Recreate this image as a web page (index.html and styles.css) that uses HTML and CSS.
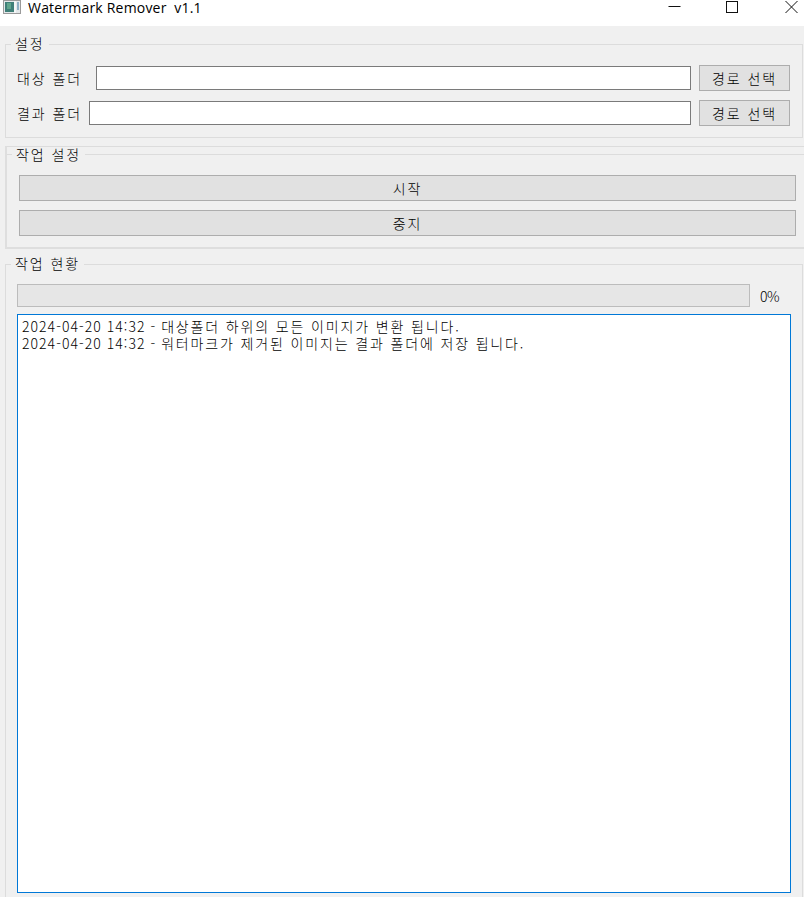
FILE: index.html
```html
<!DOCTYPE html>
<html lang="ko">
<head>
    <meta charset="UTF-8">
    <meta name="viewport" content="width=device-width, initial-scale=1.0">
    <title>Watermark Remover v1.1</title>
    <link rel="stylesheet" href="styles.css">
</head>
<body>
    <div class="titlebar">
        <svg class="app-icon" width="18" height="15" viewBox="0 0 18 15">
            <rect x="0" y="0" width="18" height="14" fill="#9a9a9a"/>
            <rect x="1" y="1" width="16" height="12" fill="#e4e8ea"/>
            <rect x="2" y="2" width="9" height="10" fill="#3f7f78"/>
            <rect x="4" y="3" width="4" height="6" fill="#5fa58c"/>
            <rect x="11" y="1" width="2" height="12" fill="#f4f6f6"/>
            <rect x="14" y="2" width="2" height="8" fill="#8fb0c4"/>
        </svg>
        <span class="app-title">Watermark Remover  v1.1</span>
        <div class="win-controls">
            <div class="win-btn">
                <svg width="13" height="13" viewBox="0 0 13 13"><path d="M0.5 6.5H12.5" stroke="#111" fill="none"/></svg>
            </div>
            <div class="win-btn">
                <svg width="13" height="13" viewBox="0 0 13 13"><rect x="0.5" y="1.5" width="11" height="11" stroke="#111" fill="none"/></svg>
            </div>
            <div class="win-btn">
                <svg width="13" height="13" viewBox="0 0 13 13"><path d="M0.5 1L12.5 13M12.5 1L0.5 13" stroke="#111" fill="none"/></svg>
            </div>
        </div>
    </div>

    <div class="content">
        <fieldset class="group group-paths">
            <legend>설정</legend>
            <div class="row">
                <label class="row-label wide">대상 폴더</label>
                <input class="path-input" type="text">
                <button class="btn btn-path">경로 선택</button>
            </div>
            <div class="row">
                <label class="row-label">결과 폴더</label>
                <input class="path-input" type="text">
                <button class="btn btn-path">경로 선택</button>
            </div>
        </fieldset>

        <div class="frame">
            <fieldset class="group group-inner">
                <legend>작업 설정</legend>
                <button class="btn btn-wide">시작</button>
                <button class="btn btn-wide">중지</button>
            </fieldset>
        </div>

        <fieldset class="group group-status">
            <legend>작업 현황</legend>
            <div class="progress-row">
                <div class="progress"></div>
                <span class="progress-text">0%</span>
            </div>
            <div class="log">
                <div><span class="log-time">2024-04-20 14:32 - </span>대상폴더 하위의 모든 이미지가 변환 됩니다.</div>
                <div><span class="log-time">2024-04-20 14:32 - </span>워터마크가 제거된 이미지는 결과 폴더에 저장 됩니다.</div>
            </div>
        </fieldset>
    </div>
</body>
</html>
```

FILE: styles.css
```css
html, body {
    height: 897px;
    overflow: hidden;
}

body {
    margin: 0;
    padding: 0;
    background-color: #F0F0F0;
    color: #000000;
    font-family: 'Noto Sans CJK KR', sans-serif;
    font-size: 14px;
    font-weight: 300;
}

.titlebar {
    display: flex;
    align-items: flex-start;
    height: 26px;
    padding-left: 3px;
    background-color: white;
}

.app-icon {
    flex: none;
}

.app-title {
    margin-left: 7px;
    font-family: 'Open Sans', sans-serif;
    font-size: 14px;
    font-weight: 400;
    line-height: 15px;
    letter-spacing: 0.2px;
    white-space: pre;
    color: #000000;
}

.win-controls {
    display: flex;
    margin-left: auto;
}

.win-btn {
    display: flex;
    justify-content: center;
    width: 58px;
}

.win-btn:last-child {
    justify-content: flex-start;
    width: 19px;
    padding-left: 24px;
}

.content {
    padding: 10px 1px 0 5px;
}

.group {
    margin: 0;
    padding: 0 12px 0 11px;
    min-width: 0;
    border: 1px solid #DCDCDC;
}

.group legend {
    margin-left: -6px;
    padding: 0 4px;
    height: 16px;
    line-height: 15px;
    letter-spacing: 1.9px;
}

.group-paths {
    padding-bottom: 12px;
}

.row {
    display: flex;
    align-items: center;
    gap: 8px;
    height: 25px;
    margin-top: 10px;
}

.group > .row:first-of-type {
    margin-top: 13px;
}

.row-label {
    flex: none;
    width: 64px;
    letter-spacing: 1.9px;
    white-space: nowrap;
}

.row-label.wide {
    width: 71px;
}

.path-input {
    flex: 1;
    min-width: 0;
    height: 24px;
    box-sizing: border-box;
    padding: 0 4px;
    background-color: white;
    border: 1px solid #7A7A7A;
    outline: none;
}

.btn {
    display: block;
    box-sizing: border-box;
    height: 26px;
    padding: 0;
    background-color: #E1E1E1;
    border: 1px solid #ADADAD;
    color: #000000;
    font-family: inherit;
    font-size: 14px;
    font-weight: 300;
    letter-spacing: 1.9px;
}

.btn-path {
    flex: none;
    width: 91px;
}

.btn-wide {
    width: 777px;
    margin-top: 9px;
}

.frame {
    margin-top: 8px;
    margin-right: -1px;
    border-top: 1px solid #DCDCDC;
    border-left: 2px solid #DEDEDE;
    border-bottom: 2px solid #DEDEDE;
}

.group-inner {
    padding: 5px 0 11px 12px;
    border-left: none;
    border-bottom: none;
    border-right: none;
}

.group-inner legend {
    margin-left: -7px;
    height: 14px;
    line-height: 14px;
}

.group-status {
    box-sizing: border-box;
    margin-top: 7px;
    height: 641px;
    padding: 0 11px 0 11px;
    border-bottom: none;
}

.progress-row {
    display: flex;
    align-items: center;
    height: 23px;
    margin-top: 12px;
}

.progress {
    width: 733px;
    height: 23px;
    box-sizing: border-box;
    background-color: #E6E6E6;
    border: 1px solid #BCBCBC;
}

.progress-text {
    margin-left: 10px;
    letter-spacing: -0.4px;
}

.log {
    box-sizing: border-box;
    height: 579px;
    margin-top: 7px;
    padding: 3px 4px 2px;
    background-color: white;
    border: 1px solid #0078D7;
    line-height: 17px;
    letter-spacing: 1.85px;
}

.log-time {
    letter-spacing: 1.05px;
}
```
